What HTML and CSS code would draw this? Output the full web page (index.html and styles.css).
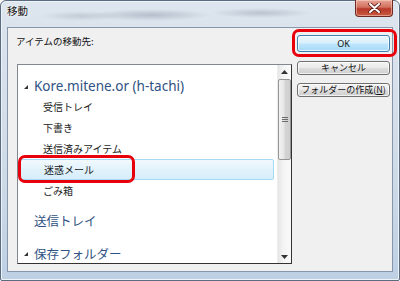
FILE: index.html
```html
<!DOCTYPE html>
<html lang="ja">
<head>
<meta charset="utf-8">
<link rel="stylesheet" href="styles.css">
</head>
<body>
<div class="window">
  <div class="titlebar">
    <span class="title">移動</span>
    <span class="smudge"></span>
    <div class="close"><svg width="13" height="10" viewBox="0 0 13 10"><path d="M2 1 L11 9 M11 1 L2 9" stroke="#5a1a14" stroke-width="3.6" stroke-linecap="round"/><path d="M2 1 L11 9 M11 1 L2 9" stroke="#fff" stroke-width="2" stroke-linecap="round"/></svg></div>
  </div>
  <div class="client">
    <div class="leftcol">
      <div class="label">アイテムの移動先:</div>
      <div class="treebox">
        <div class="items">
          <div class="row big top"><span class="tri"></span>Kore.mitene.or (h-tachi)</div>
          <div class="row sub">受信トレイ</div>
          <div class="row sub">下書き</div>
          <div class="row sub">送信済みアイテム</div>
          <div class="row sub selected">迷惑メール<span class="mark mark-row"></span></div>
          <div class="row sub">ごみ箱</div>
          <div class="row big outbox">送信トレイ</div>
          <div class="row big archive"><span class="tri"></span>保存フォルダー</div>
        </div>
        <div class="scrollbar">
          <div class="arrow up"><svg width="7" height="4" viewBox="0 0 7 4"><path d="M0 4 L3.5 0 L7 4 Z" fill="#333"/></svg></div>
          <div class="thumb"><span class="grip"></span></div>
          <div class="track"></div>
          <div class="arrow down"><svg width="7" height="4" viewBox="0 0 7 4"><path d="M0 0 L3.5 4 L7 0 Z" fill="#333"/></svg></div>
        </div>
      </div>
    </div>
    <div class="buttons">
      <div class="btn ok">OK<span class="mark mark-ok"></span></div>
      <div class="btn">キャンセル</div>
      <div class="btn">フォルダーの作成(<u>N</u>)</div>
    </div>
  </div>
</div>
</body>
</html>
```

FILE: styles.css
```css
html, body {
  margin: 0;
  padding: 0;
  background: #ffffff;
}
body {
  width: 400px;
  height: 281px;
  overflow: hidden;
  font-family: "Noto Sans CJK JP", "Noto Sans", sans-serif;
}
.window {
  box-sizing: border-box;
  width: 400px;
  height: 281px;
  display: flex;
  flex-direction: column;
  border: 1px solid #5b6c80;
  border-radius: 6px 6px 2px 2px;
  background: linear-gradient(180deg, #dde5ee 0%, #cfdbe8 60%, #bdd0e4 100%);
  box-shadow: inset 0 0 0 1px #eef3f8;
}
.titlebar {
  position: relative;
  height: 26px;
  display: flex;
  align-items: flex-start;
  justify-content: space-between;
  background:
    radial-gradient(ellipse 60px 6px at 150px 14px, rgba(110,120,135,0.35), transparent),
    radial-gradient(ellipse 50px 5px at 260px 12px, rgba(110,120,135,0.3), transparent),
    radial-gradient(ellipse 40px 5px at 80px 15px, rgba(120,130,145,0.25), transparent);
}
.title {
  margin: 3px 0 0 6px;
  font-size: 10.5px;
  line-height: 14px;
  color: #111;
  text-shadow: 0 0 4px #fff, 0 0 2px #fff;
}
.smudge { flex: 1; }
.close {
  width: 38px;
  height: 17px;
  margin: -1px 6px 0 0;
  box-sizing: border-box;
  border: 1px solid #6e2a22;
  border-top: none;
  border-radius: 0 0 4px 4px;
  background: linear-gradient(180deg, #e7a595 0%, #d2705e 45%, #b8392a 55%, #c85a40 100%);
  box-shadow: inset 0 0 0 1px rgba(255,220,210,0.5);
  display: flex;
  align-items: center;
  justify-content: center;
}
.client {
  flex: 1;
  margin: 0 6px 8px 6px;
  background: #f0f0f0;
  border: 1px solid #8796a8;
  display: flex;
  padding: 0 2px 7px 9px;
}
.leftcol {
  width: 275px;
  display: flex;
  flex-direction: column;
}
.label {
  margin: 6px 0 0 -1px;
  font-size: 9.5px;
  line-height: 14px;
  color: #111;
}
.treebox {
  margin-top: 16px;
  flex: 1;
  box-sizing: border-box;
  border: 1px solid #828790;
  border-right-color: #333;
  border-bottom-color: #333;
  background: #fff;
  display: flex;
}
.items {
  flex: 1;
  padding-top: 10px;
  padding-right: 3px;
  display: flex;
  flex-direction: column;
  overflow: hidden;
}
.row {
  position: relative;
  display: flex;
  align-items: center;
  white-space: nowrap;
}
.big {
  padding-left: 16px;
  color: #2f5283;
  font-family: "Noto Sans", "Noto Sans CJK JP", sans-serif;
  font-size: 13.5px;
  height: 21px;
}
.outbox, .archive {
  font-family: "Noto Sans CJK JP", sans-serif;
  font-size: 12.5px;
}
.outbox { margin-top: 8px; height: 22px; }
.archive { margin-top: 12px; height: 20px; }
.tri {
  position: absolute;
  left: 6px;
  top: 50%;
  margin-top: -1px;
  width: 0;
  height: 0;
  border-left: 4px solid transparent;
  border-bottom: 4px solid #333;
}
.sub {
  padding-left: 25px;
  height: 21px;
  font-size: 10px;
  color: #1a1a1a;
}
.selected {
  margin-left: 2px;
  padding-left: 23px;
  box-sizing: border-box;
  border: 1px solid #a6d9f4;
  border-radius: 2px;
  background: linear-gradient(180deg, #f1f9fe 0%, #e2f2fc 50%, #d6edfa 100%);
}
.scrollbar {
  width: 13px;
  display: flex;
  flex-direction: column;
  background: linear-gradient(90deg, #e6e6e6 0%, #f4f4f4 40%, #fafafa 100%);
  border-left: 1px solid #ececec;
}
.arrow {
  height: 13px;
  display: flex;
  align-items: center;
  justify-content: center;
}
.arrow.up { margin-bottom: 1px; }
.thumb {
  height: 81px;
  box-sizing: border-box;
  border: 1px solid #959595;
  border-radius: 2px;
  background: linear-gradient(90deg, #f2f2f2 0%, #e6e6e6 45%, #d4d4d4 55%, #cfcfcf 100%);
  display: flex;
  align-items: center;
  justify-content: center;
}
.grip {
  width: 6px;
  height: 5px;
  border-top: 1px solid #6b6b6b;
  border-bottom: 1px solid #6b6b6b;
  box-sizing: border-box;
  background: linear-gradient(180deg, transparent 1px, #6b6b6b 1px, #6b6b6b 2px, transparent 2px);
}
.track { flex: 1; }
.buttons {
  margin-left: 5px;
  width: 93px;
  padding-top: 7px;
  display: flex;
  flex-direction: column;
  gap: 8px;
}
.btn {
  position: relative;
  height: 14px;
  box-sizing: border-box;
  border: 1px solid #707070;
  border-radius: 3px;
  background: linear-gradient(180deg, #f3f3f3 0%, #ebebeb 48%, #dddddd 52%, #cfcfcf 100%);
  box-shadow: inset 0 0 0 1px rgba(255,255,255,0.7);
  font-size: 9px;
  line-height: 12px;
  text-align: center;
  color: #111;
  white-space: nowrap;
}
.btn u { text-underline-offset: 1px; }
.btn.ok {
  height: 17px;
  line-height: 15px;
  border-color: #3c7fb1;
  background: linear-gradient(180deg, #eaf6fd 0%, #d9f0fc 48%, #bee6fd 52%, #a7d9f5 100%);
  font-family: "Noto Sans", sans-serif;
}
.btn.ok + .btn { margin-top: 1px; }
.mark {
  position: absolute;
  border: 3px solid #e8000b;
  border-radius: 7px;
  pointer-events: none;
}
.mark-ok {
  left: -6px;
  top: -7px;
  right: -8px;
  bottom: -6px;
}
.mark-row {
  left: -3px;
  top: -5px;
  width: 111px;
  bottom: -4px;
}
```
